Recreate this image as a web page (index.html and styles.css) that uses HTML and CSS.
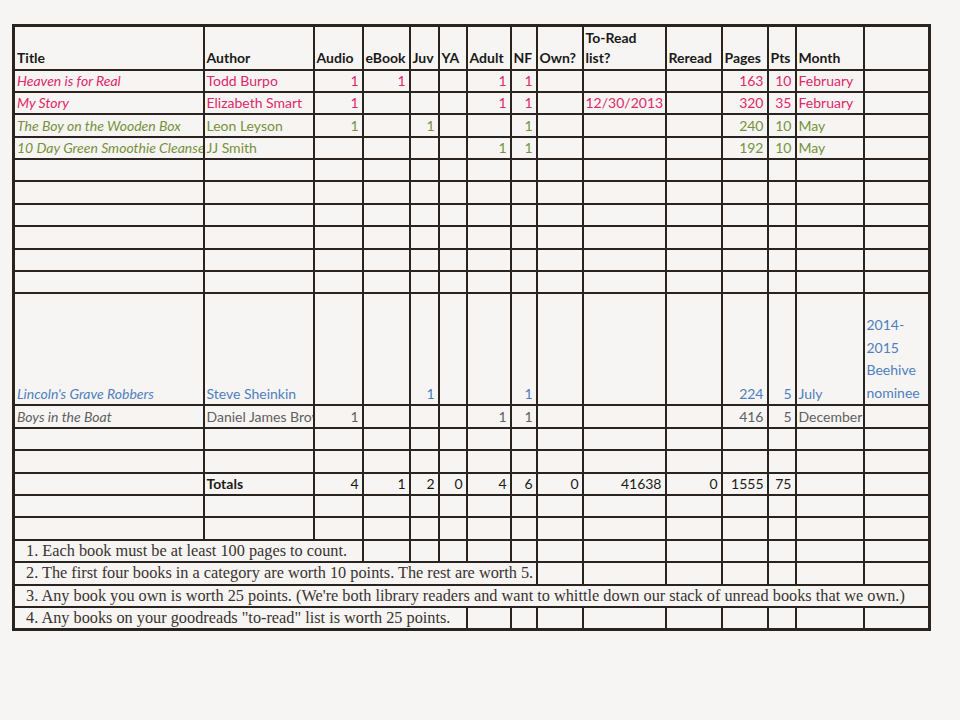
FILE: index.html
```html
<!DOCTYPE html>
<html lang="en">
<head>
<meta charset="utf-8">
<title>Reading challenge</title>
<link rel="stylesheet" href="styles.css">
</head>
<body>
<table class="sheet">
  <colgroup>
    <col class="c-title"><col class="c-author"><col class="c-audio"><col class="c-ebook"><col class="c-juv"><col class="c-ya"><col class="c-adult"><col class="c-nf"><col class="c-own"><col class="c-toread"><col class="c-reread"><col class="c-pages"><col class="c-pts"><col class="c-month"><col class="c-extra">
  </colgroup>
  <tr class="head">
    <th>Title</th><th>Author</th><th>Audio</th><th>eBook</th><th>Juv</th><th>YA</th><th>Adult</th><th>NF</th><th>Own?</th><th>To-Read<br>list?</th><th>Reread</th><th>Pages</th><th>Pts</th><th>Month</th><th></th>
  </tr>
  <tr class="row pink">
    <td class="t">Heaven is for Real</td><td>Todd Burpo</td><td class="n">1</td><td class="n">1</td><td></td><td></td><td class="n">1</td><td class="n">1</td><td></td><td></td><td></td><td class="n">163</td><td class="n">10</td><td>February</td><td></td>
  </tr>
  <tr class="row pink">
    <td class="t">My Story</td><td>Elizabeth Smart</td><td class="n">1</td><td></td><td></td><td></td><td class="n">1</td><td class="n">1</td><td></td><td class="n">12/30/2013</td><td></td><td class="n">320</td><td class="n">35</td><td>February</td><td></td>
  </tr>
  <tr class="row olive">
    <td class="t">The Boy on the Wooden Box</td><td>Leon Leyson</td><td class="n">1</td><td></td><td class="n">1</td><td></td><td></td><td class="n">1</td><td></td><td></td><td></td><td class="n">240</td><td class="n">10</td><td>May</td><td></td>
  </tr>
  <tr class="row olive">
    <td class="t">10 Day Green Smoothie Cleanse</td><td>JJ Smith</td><td></td><td></td><td></td><td></td><td class="n">1</td><td class="n">1</td><td></td><td></td><td></td><td class="n">192</td><td class="n">10</td><td>May</td><td></td>
  </tr>
  <tr class="row"><td></td><td></td><td></td><td></td><td></td><td></td><td></td><td></td><td></td><td></td><td></td><td></td><td></td><td></td><td></td></tr>
  <tr class="row"><td></td><td></td><td></td><td></td><td></td><td></td><td></td><td></td><td></td><td></td><td></td><td></td><td></td><td></td><td></td></tr>
  <tr class="row"><td></td><td></td><td></td><td></td><td></td><td></td><td></td><td></td><td></td><td></td><td></td><td></td><td></td><td></td><td></td></tr>
  <tr class="row"><td></td><td></td><td></td><td></td><td></td><td></td><td></td><td></td><td></td><td></td><td></td><td></td><td></td><td></td><td></td></tr>
  <tr class="row"><td></td><td></td><td></td><td></td><td></td><td></td><td></td><td></td><td></td><td></td><td></td><td></td><td></td><td></td><td></td></tr>
  <tr class="row"><td></td><td></td><td></td><td></td><td></td><td></td><td></td><td></td><td></td><td></td><td></td><td></td><td></td><td></td><td></td></tr>
  <tr class="tall blue">
    <td class="t">Lincoln's Grave Robbers</td><td>Steve Sheinkin</td><td></td><td></td><td class="n">1</td><td></td><td></td><td class="n">1</td><td></td><td></td><td></td><td class="n">224</td><td class="n">5</td><td>July</td><td class="wrap">2014-<br>2015<br>Beehive<br>nominee</td>
  </tr>
  <tr class="row gray">
    <td class="t">Boys in the Boat</td><td class="clip">Daniel James Brown</td><td class="n">1</td><td></td><td></td><td></td><td class="n">1</td><td class="n">1</td><td></td><td></td><td></td><td class="n">416</td><td class="n">5</td><td>December</td><td></td>
  </tr>
  <tr class="row"><td></td><td></td><td></td><td></td><td></td><td></td><td></td><td></td><td></td><td></td><td></td><td></td><td></td><td></td><td></td></tr>
  <tr class="row"><td></td><td></td><td></td><td></td><td></td><td></td><td></td><td></td><td></td><td></td><td></td><td></td><td></td><td></td><td></td></tr>
  <tr class="row totals">
    <td></td><td class="label">Totals</td><td class="n">4</td><td class="n">1</td><td class="n">2</td><td class="n">0</td><td class="n">4</td><td class="n">6</td><td class="n">0</td><td class="n">41638</td><td class="n">0</td><td class="n">1555</td><td class="n">75</td><td></td><td></td>
  </tr>
  <tr class="row"><td></td><td></td><td></td><td></td><td></td><td></td><td></td><td></td><td></td><td></td><td></td><td></td><td></td><td></td><td></td></tr>
  <tr class="row"><td></td><td></td><td></td><td></td><td></td><td></td><td></td><td></td><td></td><td></td><td></td><td></td><td></td><td></td><td></td></tr>
  <tr class="row note">
    <td colspan="3" class="rule">1. Each book must be at least 100 pages to count.</td><td></td><td></td><td></td><td></td><td></td><td></td><td></td><td></td><td></td><td></td><td></td><td></td>
  </tr>
  <tr class="row note">
    <td colspan="8" class="rule">2. The first four books in a category are worth 10 points. The rest are worth 5.</td><td></td><td></td><td></td><td></td><td></td><td></td><td></td>
  </tr>
  <tr class="row note">
    <td colspan="15" class="rule">3. Any book you own is worth 25 points. (We're both library readers and want to whittle down our stack of unread books that we own.)</td>
  </tr>
  <tr class="row note">
    <td colspan="6" class="rule">4. Any books on your goodreads "to-read" list is worth 25 points.</td><td></td><td></td><td></td><td></td><td></td><td></td><td></td><td></td><td></td>
  </tr>
</table>
</body>
</html>
```
FILE: styles.css
```css
html, body {
  margin: 0;
  padding: 0;
  background: #f6f5f3;
}

body {
  padding: 24px 0 0 12px;
  font-family: Lato, "Open Sans", sans-serif;
  font-size: 14px;
  color: #1c1a19;
}

.sheet {
  border-collapse: collapse;
  table-layout: fixed;
  width: 919px;
  border: 3px solid #2a2420;
}

.c-title { width: 190px; }
.c-author { width: 110px; }
.c-audio { width: 49px; }
.c-ebook { width: 47px; }
.c-juv { width: 29px; }
.c-ya { width: 28px; }
.c-adult { width: 44px; }
.c-nf { width: 26px; }
.c-own { width: 46px; }
.c-toread { width: 83px; }
.c-reread { width: 56px; }
.c-pages { width: 46px; }
.c-pts { width: 28px; }
.c-month { width: 68px; }
.c-extra { width: 66px; }

th, td {
  border: 2px solid #2a2420;
  padding: 0 2px;
  vertical-align: bottom;
  text-align: left;
  white-space: nowrap;
  overflow: hidden;
  line-height: 20px;
}

th {
  font-weight: bold;
  line-height: 20.5px;
  padding-bottom: 0;
}

.head { height: 44px; }
.row { height: 22.4px; }
.tall { height: 112px; }

.n { text-align: right; padding-right: 3px; }
.t { font-style: italic; }

.pink td { color: #e0276a; }
.olive td { color: #77923c; }
.blue td { color: #4f7fc0; }
.gray td { color: #626060; }

.clip { text-overflow: clip; }

.wrap {
  white-space: normal;
  line-height: 22.5px;
}

.label { font-weight: bold; }

.rule {
  font-family: "Liberation Serif", "Times New Roman", serif;
  font-variant-numeric: oldstyle-nums;
  font-size: 16.3px;
  color: #3a3330;
  padding-left: 11px;
  vertical-align: middle;
}
```
